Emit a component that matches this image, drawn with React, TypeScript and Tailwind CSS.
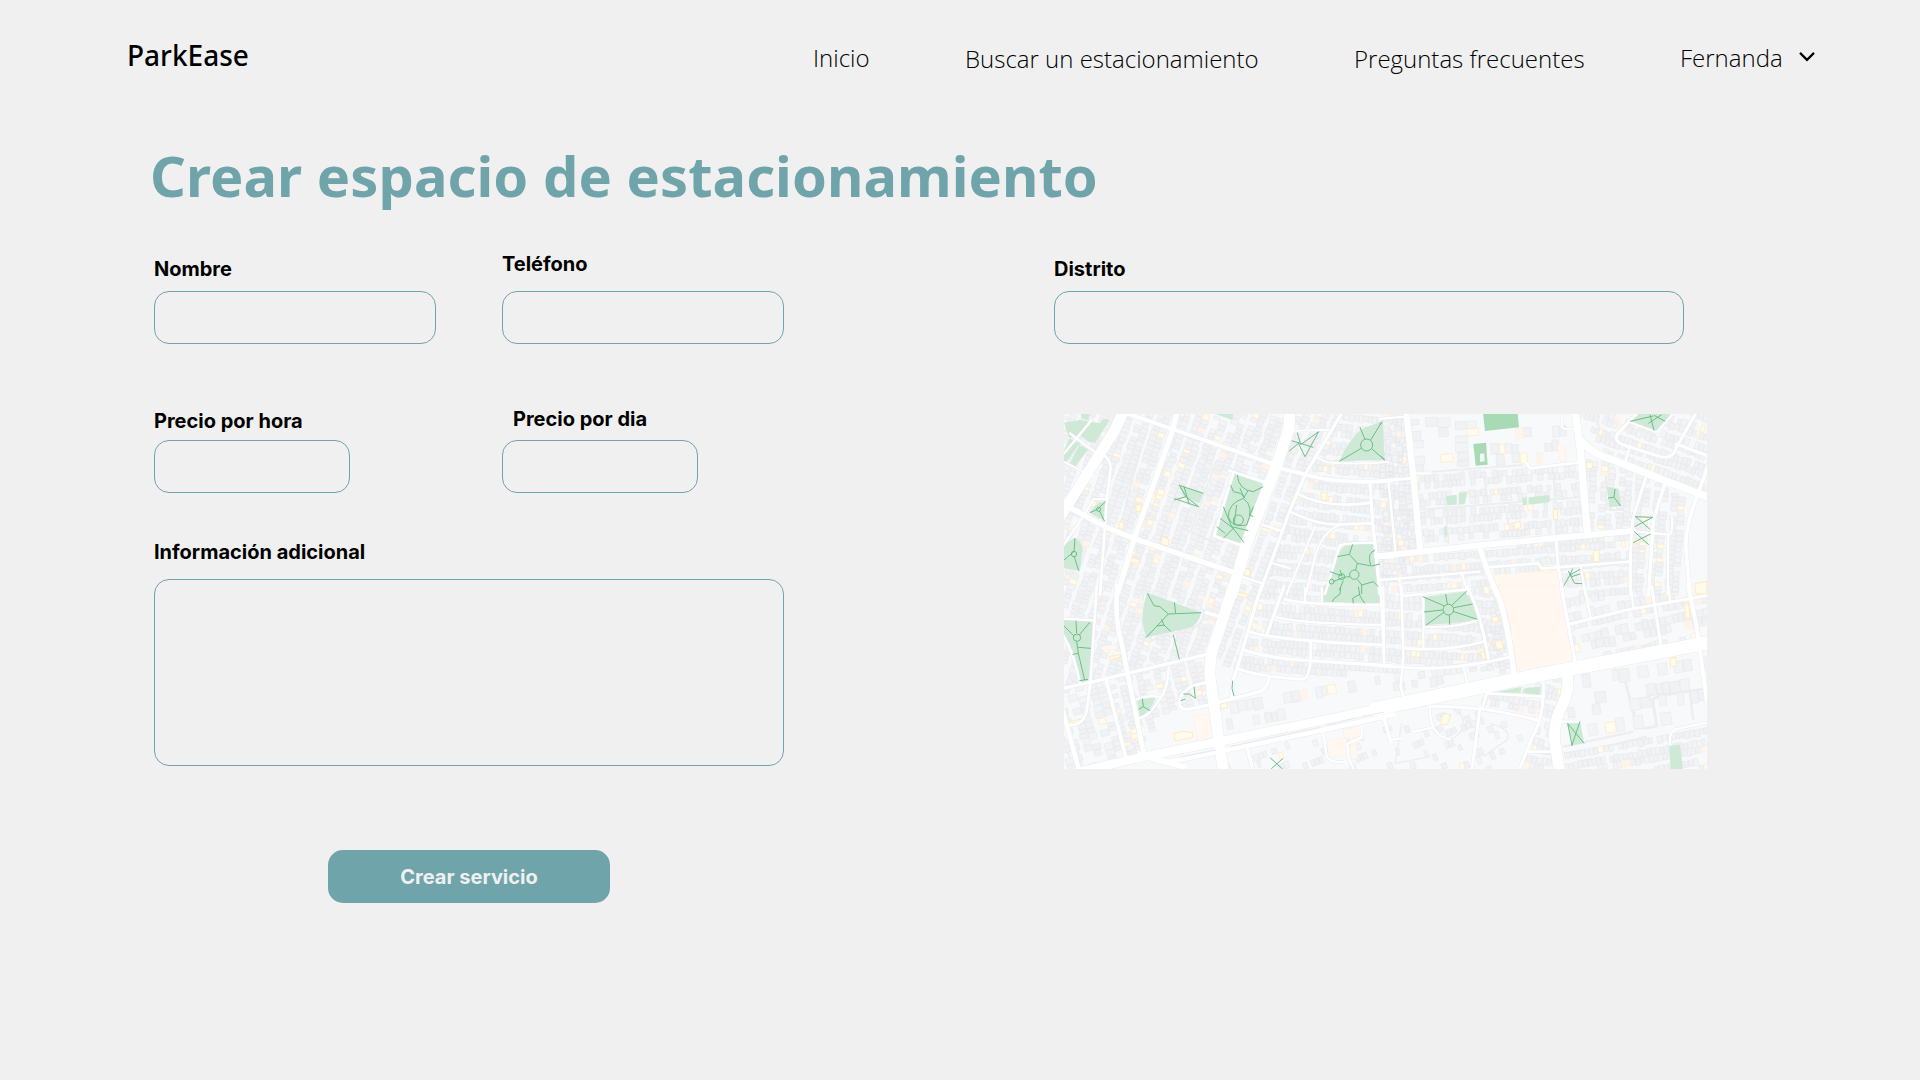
import React from "react";

type Pt = [number, number];
type Region = { poly: Pt[]; angle: number; density: number; scale?: number };

const QUADS = ["translate(-12 -12)", "translate(948 -12)", "translate(-12 528)", "translate(948 528)"];

const REGIONS: Region[] = [
  { poly: [[0, 0], [670, 0], [630, 160], [500, 540], [430, 720], [0, 830]], angle: 109, density: 0.93 },
  { poly: [[680, 0], [830, 0], [590, 540], [500, 780], [440, 720], [520, 540], [650, 160]], angle: 110, density: 0.93 },
  { poly: [[830, 0], [1030, 0], [1060, 430], [945, 545], [590, 540], [690, 290]], angle: 6, density: 0.96 },
  { poly: [[585, 540], [1340, 530], [1340, 735], [1230, 740], [1000, 770], [740, 790], [500, 780]], angle: 4, density: 0.95 },
  { poly: [[1055, 175], [1550, 155], [1565, 350], [1075, 405]], angle: -4, density: 0.78 },
  { poly: [[948, 0], [1020, 0], [1060, 420], [948, 430]], angle: 86, density: 0.9 },
  { poly: [[948, 435], [1690, 355], [1700, 540], [1500, 540], [1480, 460], [1270, 480], [1300, 540], [948, 540]], angle: -4, density: 0.9 },
  { poly: [[1545, 0], [1929, 0], [1929, 240], [1620, 115]], angle: 19, density: 0.88 },
  { poly: [[1560, 130], [1640, 145], [1880, 250], [1860, 540], [1700, 540], [1690, 340], [1575, 350]], angle: 94, density: 0.9 },
  { poly: [[1500, 540], [1929, 540], [1929, 680], [1535, 740]], angle: -12, density: 0.8, scale: 1.35 },
  { poly: [[1300, 540], [1350, 780], [1200, 770]], angle: 80, density: 0.8 },
  { poly: [[0, 820], [120, 800], [230, 1020], [100, 1065], [0, 1065]], angle: 74, density: 0.72, scale: 1.2 },
  { poly: [[130, 800], [440, 720], [440, 870], [300, 900], [230, 1010], [180, 1020]], angle: 76, density: 0.84 },
  { poly: [[470, 850], [780, 810], [940, 800], [500, 960]], angle: -10, density: 0.45, scale: 1.6 },
  { poly: [[940, 760], [1330, 745], [1050, 830], [940, 840]], angle: -8, density: 0.5, scale: 1.3 },
  { poly: [[480, 1030], [980, 920], [1240, 880], [1390, 930], [1320, 1065], [480, 1065]], angle: -20, density: 0.26 },
  { poly: [[1260, 840], [1430, 800], [1500, 790], [1460, 1065], [1370, 1065], [1430, 910], [1260, 875]], angle: 12, density: 0.85 },
  { poly: [[1510, 790], [1929, 710], [1929, 925], [1510, 990]], angle: -8, density: 0.42, scale: 1.9 },
  { poly: [[1490, 1010], [1810, 950], [1929, 930], [1929, 1065], [1510, 1065]], angle: -10, density: 0.95 },
  { poly: [[1050, 10], [1230, 10], [1230, 160], [1060, 165]], angle: 86, density: 0.5, scale: 1.7 },
  { poly: [[1275, 80], [1500, 20], [1530, 140], [1275, 150]], angle: -3, density: 0.55, scale: 1.5 },
];

type Road = [number, string, number];
const ROADS: Road[] = [
  [0, "M690,0 L686,60 L650,165 L560,400 L516,552", 34],
  [0, "M192,0 L165,60 L35,265 L0,320", 32],
  [0, "M353,0 L335,70 L225,380 L172,552", 16],
  [0, "M200,10 L340,58 L640,162", 12],
  [0, "M650,172 L760,200 Q850,222 995,212", 12],
  [0, "M15,285 L135,350 L220,385 L535,492", 16],
  [0, "M848,5 L740,185 L690,300 L598,552", 9],
  [0, "M128,135 Q152,145 152,175 L140,270 L135,350 L120,552", 8],
  [0, "M700,62 L805,60", 6],
  [0, "M765,140 L800,157 M800,157 Q900,165 985,155", 6],
  [0, "M710,250 Q800,298 935,278", 8],
  [0, "M690,305 Q780,348 840,343 L935,340", 8],
  [0, "M930,215 L938,340 L945,400 L960,552", 10],
  [0, "M508,182 L614,216 M520,188 L462,378 L548,407", 8],
  [0, "M610,345 L662,362 M640,460 L690,475 M545,500 L605,520", 7],
  [0, "M765,350 L680,552", 6],
  [0, "M840,345 Q790,360 765,440 L738,552", 7],
  [0, "M945,398 Q850,398 838,408 L795,552", 7],
  [0, "M0,150 L100,200 M0,145 L95,30 M30,70 L110,130", 6],
  [0, "M140,266 L100,268 L70,320 L0,420", 6],
  [0, "M950,438 L995,438", 17],
  [1, "M78,0 L100,200 L121,425", 19],
  [1, "M-5,439 L300,406 L760,362", 18],
  [1, "M585,0 L600,110 L622,365", 22],
  [1, "M600,90 Q640,135 700,150 L850,210 L995,266", 22],
  [1, "M-5,212 L100,205", 9],
  [1, "M25,212 L47,428", 7],
  [1, "M0,26 L72,20", 6],
  [1, "M105,190 L150,190", 7],
  [1, "M440,160 L450,175 L590,158", 8],
  [1, "M545,5 L545,50 Q548,60 590,55", 6],
  [1, "M775,5 L712,72 Q698,95 740,108 L840,140 Q880,150 890,110 L950,5", 9],
  [1, "M750,37 L830,67 L882,8", 6],
  [1, "M890,102 L995,142", 9],
  [1, "M750,108 L735,160", 7],
  [1, "M990,150 L940,290 Q915,360 918,420 L930,552", 11],
  [1, "M855,220 L820,330 L806,552", 10],
  [1, "M797,205 L760,320 Q748,400 752,552", 9],
  [1, "M760,364 L865,374 Q880,372 876,322 M865,374 L863,552", 7],
  [1, "M300,415 L318,470 L350,552", 16],
  [1, "M320,472 L475,460 L485,476 L750,455", 8],
  [1, "M528,392 L535,475 L550,552", 9],
  [1, "M0,510 L298,485 M245,487 L264,552", 7],
  [1, "M603,472 L616,552 M58,508 L64,552", 7],
  [2, "M520,-10 L468,150 Q448,190 450,260 L490,545", 33],
  [2, "M172,-10 Q162,80 185,160 L252,495", 14],
  [2, "M0,297 L100,275 L445,192", 10],
  [2, "M30,552 L250,500 L500,450 L820,385 L1000,345", 26],
  [2, "M330,515 L480,484 L780,422 L1000,374", 15],
  [2, "M240,495 L370,530", 18],
  [2, "M8,360 L60,552", 14],
  [2, "M110,-10 L92,270 L82,350 Q75,410 25,405", 8],
  [2, "M0,120 Q40,180 60,280", 7],
  [2, "M0,85 L105,92", 7],
  [2, "M140,275 L197,500", 11],
  [2, "M438,68 L480,80", 10],
  [2, "M603,-10 L530,240 Q512,280 516,325", 10],
  [2, "M475,337 L600,305 Q625,295 628,260", 10],
  [2, "M672,-10 L620,135", 9],
  [2, "M675,28 Q730,45 965,45", 9],
  [2, "M650,82 Q720,100 965,105", 7],
  [2, "M566,125 Q640,150 965,165", 9],
  [2, "M550,180 Q640,208 750,212 L995,228", 10],
  [2, "M530,235 Q600,262 730,268 Q755,262 752,155", 9],
  [2, "M962,-10 L972,220 M785,-5 L785,32 M735,-5 L735,38", 7],
  [2, "M325,240 Q325,300 290,340 Q270,375 240,385 M230,328 Q260,315 300,320", 7],
  [2, "M445,278 Q380,282 360,325 Q350,362 390,357 L445,345", 9],
  [2, "M562,475 L580,545", 10],
  [2, "M790,430 L800,500 Q812,520 855,515 M905,410 L905,442 L862,462 L865,500 L882,540", 7],
  [2, "M975,390 L992,455", 8],
  [3, "M-15,357 L500,250 L995,156", 41],
  [3, "M558,235 Q575,300 540,360 Q518,410 525,460 L540,552", 33],
  [3, "M340,-12 Q375,40 402,250", 17],
  [3, "M262,-8 Q300,60 325,205", 9],
  [3, "M64,-10 L70,200 L62,290 L70,320", 8],
  [3, "M-5,228 L70,232 Q200,245 395,200", 9],
  [3, "M75,175 Q200,185 310,155", 8],
  [3, "M130,110 Q230,115 295,90 M130,15 L130,175 M68,18 L270,-3", 7],
  [3, "M543,-10 L586,218", 10],
  [3, "M570,102 L740,60 L995,14", 9],
  [3, "M613,-10 L632,85 M752,-10 L760,50 M865,-10 L870,30", 7],
  [3, "M815,-10 L842,160", 9],
  [3, "M925,-10 L950,110 L980,330", 12],
  [3, "M250,232 L262,280 M10,-10 L13,220", 7],
  [3, "M308,352 L320,310 L490,320", 8],
  [3, "M490,285 Q492,380 458,440 L415,545", 9],
  [3, "M150,350 Q300,345 470,390 M300,355 L275,545", 9],
  [3, "M150,355 Q150,440 210,448 M10,385 L30,450 L65,445 M100,425 L160,412", 7],
  [3, "M445,485 L520,485 M545,395 L600,395", 8],
  [3, "M870,462 Q868,425 885,418 L990,396", 7],
];

const MINOR: Road[] = [
  [0, "M410,90 L300,390 M470,150 L390,370 M260,50 L200,270 Q190,305 235,320 M600,12 L585,100", 6],
  [0, "M395,370 L460,395 M470,150 L520,180 M305,40 L400,90", 6],
  [1, "M155,185 L430,165 M110,300 L600,262 M380,290 L388,385 M520,175 L530,385", 6],
  [1, "M310,180 L322,270 M195,280 L205,400 M680,180 Q670,290 690,300 L750,300", 6],
  [1, "M655,12 Q640,60 700,85", 6],
  [2, "M250,10 Q235,90 262,155 L400,115 Q440,90 430,60 L390,40 M12,440 L40,540", 7],
  [3, "M700,240 Q728,238 735,270 L770,405 Q780,422 830,408 L818,330 Q815,318 970,298", 9],
  [3, "M555,500 L800,440 M550,470 L760,425 M930,310 L940,390", 7],
  [3, "M180,345 Q250,360 250,395 Q250,440 200,450 M65,400 L45,520 L150,500 M330,400 Q400,420 380,450 L310,500", 4],
];

type Park = [number, string, boolean?];
const PARKS: Park[] = [
  [0, "M12,38 L60,30 L120,40 L128,28 L150,28 L105,98 L85,95 L60,75 L28,85 Z"],
  [0, "M28,85 L60,100 L12,165 L12,120 Z M58,105 L85,118 L45,170 L30,160 Z M62,12 L88,12 L85,30 L66,24 Z M465,12 L520,12 L517,30 Z"],
  [0, "M90,308 Q110,275 138,272 L135,334 Z"],
  [0, "M12,405 L42,384 Q66,395 68,415 L60,482 L12,475 Z"],
  [0, "M358,228 L430,250 L418,280 L372,262 Z"],
  [0, "M522,190 L610,222 L552,408 L466,378 Z"],
  [0, "M966,35 L974,150 L838,154 Q870,80 915,52 Z"],
  [0, "M838,428 Q845,404 880,402 L943,402 L962,552 L795,552 Z"],
  [1, "M-5,36 L8,36 L14,150 L-5,138 Z"],
  [1, "M765,12 L872,12 L830,62 L750,34 Z"],
  [1, "M309,10 L413,10 L417,52 L315,63 Z", true],
  [1, "M280,102 L318,98 L323,164 L287,167 Z", true],
  [1, "M198,258 L230,254 L231,284 L200,286 Z M236,248 L262,247 L254,282 L236,284 Z M427,264 L440,262 L441,284 L429,286 Z M446,262 L508,255 L509,277 L446,284 Z M192,350 L200,350 L201,380 L195,382 Z"],
  [1, "M681,230 L715,236 L724,288 L688,292 Z"],
  [2, "M12,88 L102,94 L85,275 L58,280 L45,195 L12,135 Z"],
  [2, "M262,8 L424,68 Q415,105 385,115 L260,142 Q235,80 262,8 Z"],
  [2, "M232,330 L287,322 Q270,370 240,380 Z"],
  [2, "M792,-14 L960,-14 L963,41 L790,35 Z"],
  [3, "M126,22 L262,4 L295,88 L240,97 L137,106 Z"],
  [3, "M340,308 L425,290 L422,308 Z M430,300 L440,293 L482,290 L480,318 L432,308 Z"],
  [3, "M563,398 L600,394 L613,460 L578,466 Z"],
  [3, "M867,468 L900,464 L911,552 L873,552 Z"],
];

const TRAILS: [number, string][] = [
  [0, "M712,68 L722,104 L776,65 L735,140 L715,100 L687,124 M695,92 L760,112"],
  [0, "M900,52 L915,88 M966,35 L932,90 M838,154 L905,114 M974,150 L935,116 M938,105 A18,18 0 1 0 902,105 A18,18 0 1 0 938,105"],
  [0, "M90,308 L112,298 L137,275 M118,302 L134,334 M122,298 A6,6 0 1 0 110,298 A6,6 0 1 0 122,298"],
  [0, "M45,384 L42,425 L12,450 M42,438 L56,482 M50,432 A8,8 0 1 0 34,432 A8,8 0 1 0 50,432"],
  [0, "M358,226 L430,250 M358,226 L378,260 L343,270 M343,266 L416,290 M372,230 L388,284 M378,260 L416,290"],
  [0, "M532,195 Q535,240 580,245 L610,230 M512,225 L520,245 L542,250 L555,265 M540,235 L552,262 L565,240 M550,265 Q505,280 505,320 Q515,355 560,345 Q585,290 550,265"],
  [0, "M550,330 A15,15 0 1 0 520,330 A15,15 0 1 0 550,330 M530,285 L522,345 M490,290 L515,350 L565,362 M480,325 L520,355 L490,385 M470,350 L495,370 M515,350 L535,375 L552,398 M580,290 L570,315 L580,320"],
  [0, "M878,403 L868,433 L832,440 M868,433 L892,460 L887,480 M892,460 L935,468 L960,462 M945,420 Q920,430 932,465 M897,494 A14,14 0 1 0 869,494 A14,14 0 1 0 897,494 M870,500 L850,502 L820,515 M840,480 L846,498 L810,485 M850,512 L838,540 M892,508 L905,525 L940,515 L955,530 M905,525 L905,552 M854,500 A9,9 0 1 0 836,500 A9,9 0 1 0 854,500 M822,515 A7,7 0 1 0 808,515 A7,7 0 1 0 822,515"],
  [1, "M0,44 L5,36 M0,138 L14,149"],
  [1, "M750,34 L820,18 M810,14 L822,62 M822,16 L856,34 M845,14 L805,40"],
  [1, "M705,237 L702,262 L684,264 M702,262 L722,288"],
  [1, "M765,318 L810,358 M764,350 L818,322 L765,320 M762,364 L806,404 M759,398 L812,372"],
  [1, "M578,476 L570,495 L552,526 M570,495 L600,478 M568,490 L584,520 L606,521 M565,483 L575,500 L600,492"],
  [2, "M48,92 L50,130 M12,108 L42,138 M90,96 L58,135 M50,154 L55,190 L38,193 M55,172 L92,175 M55,190 L74,270 M58,272 L84,268 M62,143 A11,11 0 1 0 40,143 A11,11 0 1 0 62,143"],
  [2, "M262,10 L282,47 L300,50 L325,72 L424,68 M325,72 L258,143 M343,37 L347,70 M290,108 L312,105 L332,124 M305,88 L312,106 M340,135 L358,208"],
  [2, "M247,326 L250,350 L236,358 M250,350 L270,362"],
  [2, "M402,290 L406,325 L388,312 L370,312 M362,332 L375,328 M518,272 L516,295 L522,318"],
  [2, "M630,503 L668,537 M669,505 L634,536"],
  [2, "M842,-8 L840,12 L822,26 L817,36 M895,-10 L900,18 L914,40 M900,12 L878,25 L880,40"],
  [3, "M197,12 L202,42 M260,4 L215,46 M278,42 L221,53 M292,88 L218,64 M209,104 L208,74 M137,106 L193,66 M132,66 L188,60 M128,20 L194,48 M221,59 A16,16 0 1 0 189,59 A16,16 0 1 0 221,59"],
  [3, "M563,400 L612,460 M600,394 L575,468 M563,400 L576,466"],
];

const PEACH: [number, string][] = [
  [1, "M332,495 L533,480 L553,552 L350,552 Z"],
  [3, "M352,-14 L545,-14 L582,215 L413,248 L385,80 Z"],
  [2, "M400,380 L450,372 L462,440 L412,456 Z M800,455 L860,443 L862,490 L808,504 Z M850,418 L902,408 L902,440 L852,446 Z M870,466 L888,464 L893,506 L875,508 Z"],
  [1, "M532,108 L554,105 L558,154 L540,156 Z"],
  [2, "M575,95 L612,112 L605,125 L574,112 Z M125,170 L172,164 L174,176 L127,182 Z"],
];

const YELLOW: [number, string][] = [
  [2, "M342,430 L370,424 L398,428 L398,442 L345,454 Z M28,395 L62,388 L64,402 L30,405 Z M147,200 L180,194 L182,202 L150,210 Z M479,342 L500,336 L503,352 L482,357 Z M527,5 L565,14 L560,24 L527,14 Z"],
  [3, "M183,385 L196,370 L212,375 L202,403 L184,404 Z M912,42 L925,40 L931,84 L917,86 Z M335,82 L352,78 L355,94 L338,98 Z M345,155 L365,150 L370,175 L350,178 Z M302,188 L312,183 L318,206 L307,208 Z M870,205 L888,202 L889,228 L872,230 Z"],
  [1, "M400,340 L420,333 L423,352 L404,360 Z M944,520 L980,515 L980,552 L948,552 Z M640,422 L657,420 L658,455 L640,455 Z M520,298 L532,297 L533,330 L520,328 Z M617,158 L636,155 L638,174 L620,176 Z"],
  [0, "M208,440 L240,450 L235,462 L208,455 Z M304,380 L328,388 L325,408 L306,404 Z M177,335 L192,338 L190,360 L176,354 Z M553,474 L572,480 L568,500 L553,495 Z M782,246 L802,249 L799,272 L784,270 Z M228,282 L246,285 L242,306 L228,304 Z"],
];

// Deterministic generator so the blocks look the same on every render.
function makeRandom(seed: number) {
  let s = seed;
  return () => {
    s = (s * 1664525 + 1013904223) % 4294967296;
    return s / 4294967296;
  };
}

function inside(x: number, y: number, poly: Pt[]) {
  let hit = false;
  for (let i = 0, j = poly.length - 1; i < poly.length; j = i++) {
    const [xi, yi] = poly[i];
    const [xj, yj] = poly[j];
    if (yi > y !== yj > y && x < ((xj - xi) * (y - yi)) / (yj - yi) + xi) hit = !hit;
  }
  return hit;
}

function buildBlocks() {
  const rnd = makeRandom(77);
  const out = { gray: "", pale: "", yellow: "", peach: "" };
  for (const { poly, angle, density, scale = 1 } of REGIONS) {
    const a = (angle * Math.PI) / 180;
    const c = Math.cos(a);
    const s = Math.sin(a);
    const cx = poly.reduce((t, p) => t + p[0], 0) / poly.length;
    const cy = poly.reduce((t, p) => t + p[1], 0) / poly.length;
    const R = 700;
    let row = 0;
    for (let v = -R; v < R; row++) {
      const h = 22 * scale;
      for (let u = -R; u < R; ) {
        const w = (9 + rnd() * 8) * scale;
        const hh = h * (0.72 + rnd() * 0.28);
        const off = row % 2 ? 0 : h - hh;
        const roll = rnd();
        const keep = rnd() < density;
        const mx = cx + (u + w / 2) * c - (v + h / 2) * s;
        const my = cy + (u + w / 2) * s + (v + h / 2) * c;
        if (keep && inside(mx, my, poly)) {
          const corner = (du: number, dv: number) =>
            `${(cx + (u + du) * c - (v + off + dv) * s).toFixed(1)},${(cy + (u + du) * s + (v + off + dv) * c).toFixed(1)}`;
          const d = `M${corner(0, 0)}L${corner(w, 0)}L${corner(w, hh)}L${corner(0, hh)}Z`;
          if (roll < 0.035) out.yellow += d;
          else if (roll < 0.055) out.peach += d;
          else if (roll < 0.4) out.pale += d;
          else out.gray += d;
        }
        u += w + 1.5;
      }
      v += h + (row % 2 ? 8 : 2);
    }
  }
  return out;
}

const BLOCKS = buildBlocks();

function DistrictMap() {
  return (
    <svg className="block h-[355px] w-[643px]" viewBox="0 0 1929 1065" preserveAspectRatio="none" fill="none" aria-label="Mapa del distrito">
      <rect width="1929" height="1065" fill="#f8f9fb" />
      {MINOR.map(([q, d, w], i) => (
        <path key={i} d={d} transform={QUADS[q]} stroke="#eceef0" strokeWidth={w} />
      ))}
      <path d={BLOCKS.gray} fill="#f1f2f4" stroke="#e4e6e9" strokeWidth="1.7" />
      <path d={BLOCKS.pale} fill="#f3f4f6" stroke="#e6e8eb" strokeWidth="1.7" />
      <path d={BLOCKS.yellow} fill="#fffbf0" stroke="#feeccb" strokeWidth="2.6" />
      <path d={BLOCKS.peach} fill="#fef4ea" stroke="#fdefe2" strokeWidth="1.5" />
      {PEACH.map(([q, d], i) => (
        <path key={i} d={d} transform={QUADS[q]} fill="#fff7f0" stroke="#fdefe2" strokeWidth="1.5" />
      ))}
      {YELLOW.map(([q, d], i) => (
        <path key={i} d={d} transform={QUADS[q]} fill="#fffaea" stroke="#fee8b8" strokeWidth="2.6" />
      ))}
      {PARKS.map(([q, d, dark], i) => (
        <path key={i} d={d} transform={QUADS[q]} fill={dark ? "#a8dab5" : "#ceead6"} />
      ))}
      <g strokeLinejoin="round">
        {ROADS.map(([q, d, w], i) => (
          <path key={i} d={d} transform={QUADS[q]} stroke="#e9ebee" strokeWidth={w + 3} />
        ))}
        {ROADS.map(([q, d, w], i) => (
          <path key={i} d={d} transform={QUADS[q]} stroke="#ffffff" strokeWidth={w} strokeLinecap="round" />
        ))}
      </g>
      <path d="M300,131 L313,130 L314,154 L300,156 Z" transform="translate(948 -12)" fill="#f3f5f6" />
      <path d="M360,502 L470,480 M510,470 L780,412 M800,405 L890,383 M905,380 L970,367" transform="translate(-12 528)" stroke="#e4e6e9" strokeWidth="2.5" />
      {TRAILS.map(([q, d], i) => (
        <path key={i} d={d} transform={QUADS[q]} stroke="#64bb7f" strokeWidth="2.8" strokeLinejoin="round" />
      ))}
    </svg>
  );
}

const LABEL = "block text-[20px] font-bold leading-6 tracking-normal whitespace-nowrap";
const BOX = "block rounded-[15px] border border-[#6fa4aa] bg-transparent outline-none";

export default function App() {
  return (
    <div className="h-[1080px] w-[1920px] overflow-hidden bg-[#f0f0f0] font-['Inter',sans-serif] text-black">
      <header className="flex h-[130px] items-start pl-[127px] font-['Open_Sans','Noto_Sans',sans-serif]">
        <div className="mt-[35px] w-[686px] font-['Noto_Sans',sans-serif] text-[28px] font-medium leading-10">ParkEase</div>
        <nav className="flex items-start text-[24px] font-light leading-10 whitespace-nowrap">
          <a className="mt-[38px] w-[152px]">Inicio</a>
          <a className="mt-[39px] w-[389px]">Buscar un estacionamiento</a>
          <a className="mt-[39px] w-[326px]">Preguntas frecuentes</a>
          <a className="mt-[38px] flex items-start">
            <span className="w-[119px]">Fernanda</span>
            <svg className="mt-[13px] h-[12px] w-[16px]" viewBox="0 0 16 12" fill="none" stroke="#000" strokeWidth="2.2">
              <path d="M1 1.9 L8 8.9 L15 1.9" />
            </svg>
          </a>
        </nav>
      </header>
      <h1 className="h-[114px] pl-[150px] font-['Noto_Sans',sans-serif] text-[56px] font-bold leading-[90px] tracking-[0.06px] text-[#6fa4aa]">
        Crear espacio de estacionamiento
      </h1>
      <main className="flex pl-[154px]">
        <form className="flex w-[900px] flex-col">
          <div className="flex h-[149px]">
            <label className="w-[348px]">
              <span className={`${LABEL} pt-[13px]`}>Nombre</span>
              <input className={`${BOX} mt-[10px] h-[53px] w-[282px]`} />
            </label>
            <label>
              <span className={`${LABEL} pt-[8px]`}>Teléfono</span>
              <input className={`${BOX} mt-[15px] h-[53px] w-[282px]`} />
            </label>
          </div>
          <div className="flex h-[139px]">
            <label className="w-[348px]">
              <span className={`${LABEL} pt-[16px]`}>Precio por hora</span>
              <input className={`${BOX} mt-[7px] h-[53px] w-[196px]`} />
            </label>
            <label>
              <span className={`${LABEL} pl-[11px] pt-[14px]`}>Precio por dia</span>
              <input className={`${BOX} mt-[9px] h-[53px] w-[196px]`} />
            </label>
          </div>
          <label className="block">
            <span className={`${LABEL} pt-[8px]`}>Información adicional</span>
            <textarea className={`${BOX} mt-[15px] h-[187px] w-[630px] resize-none`} />
          </label>
          <button type="button" className="ml-[174px] mt-[84px] h-[53px] w-[282px] rounded-[15px] bg-[#6fa4aa] text-[20px] font-bold text-[#f0f0f0]">
            Crear servicio
          </button>
        </form>
        <section className="flex flex-col">
          <label>
            <span className={`${LABEL} pt-[13px]`}>Distrito</span>
            <input className={`${BOX} mt-[10px] h-[53px] w-[630px]`} />
          </label>
          <div className="ml-[10px] mt-[70px]">
            <DistrictMap />
          </div>
        </section>
      </main>
    </div>
  );
}
